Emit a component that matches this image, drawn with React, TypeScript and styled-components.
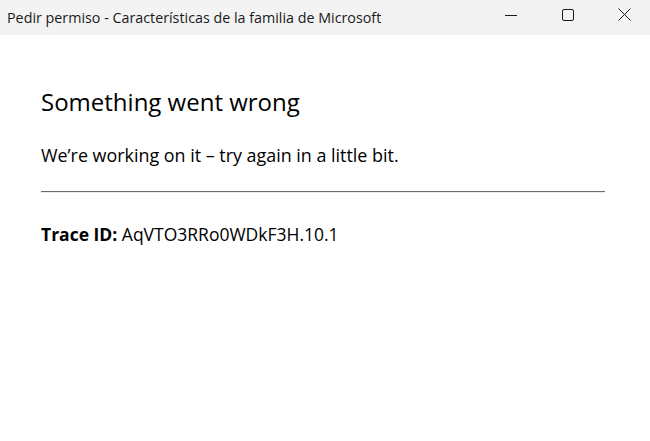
import React from "react";
import styled, { createGlobalStyle } from "styled-components";

const GlobalStyle = createGlobalStyle`
  html, body {
    margin: 0;
    padding: 0;
    background: #ffffff;
  }
  body {
    font-family: "Open Sans", "Noto Sans", sans-serif;
    color: #000000;
  }
`;

const Window = styled.div`
  width: 650px;
  height: 441px;
  display: flex;
  flex-direction: column;
  background: #ffffff;
  overflow: hidden;
`;

const TitleBar = styled.div`
  height: 35px;
  background: #f3f3f3;
  display: flex;
  align-items: center;
  justify-content: space-between;
  padding-left: 7px;
  overflow: hidden;
`;

const Title = styled.div`
  font-size: 14.3px;
  color: #1a1a1a;
  white-space: nowrap;
  margin-top: -1px;
`;

const Controls = styled.div`
  display: flex;
  height: 100%;
  margin-right: -3px;
`;

const ControlButton = styled.div`
  width: 57px;
  height: 100%;
  display: flex;
  align-items: center;
  justify-content: center;
  color: #1a1a1a;
  padding-bottom: 6px;
  box-sizing: border-box;
`;

const Content = styled.main`
  padding: 51px 45px 0 41px;
  display: flex;
  flex-direction: column;
`;

const Heading = styled.h1`
  margin: 0;
  font-size: 24px;
  font-weight: 400;
  line-height: 32px;
`;

const Message = styled.p`
  margin: 25px 0 0;
  font-size: 17.9px;
  line-height: 24px;
`;

const Divider = styled.hr`
  margin: 24px 0 0;
  border: none;
  border-top: 1px solid #6d6d6d;
  border-bottom: 1px solid #ececec;
  height: 0;
`;

const Trace = styled.p`
  margin: 29px 0 0;
  font-size: 17.5px;
  line-height: 24px;
`;

const Label = styled.span`
  font-weight: 700;
`;

export default function App() {
  return (
    <>
      <GlobalStyle />
      <Window>
        <TitleBar>
          <Title>Pedir permiso - Características de la familia de Microsoft</Title>
          <Controls>
            <ControlButton>
              <svg width="12" height="12" viewBox="0 0 12 12">
                <path d="M0 6.5h12" stroke="currentColor" strokeWidth="1" />
              </svg>
            </ControlButton>
            <ControlButton>
              <svg width="12" height="12" viewBox="0 0 12 12">
                <rect x="0.5" y="0.5" width="11" height="11" rx="1.5" fill="none" stroke="currentColor" strokeWidth="1" />
              </svg>
            </ControlButton>
            <ControlButton>
              <svg width="13" height="13" viewBox="0 0 13 13">
                <path d="M0.5 0.5l12 12M12.5 0.5l-12 12" stroke="currentColor" strokeWidth="1" />
              </svg>
            </ControlButton>
          </Controls>
        </TitleBar>
        <Content>
          <Heading>Something went wrong</Heading>
          <Message>We’re working on it – try again in a little bit.</Message>
          <Divider />
          <Trace>
            <Label>Trace ID:</Label> AqVTO3RRo0WDkF3H.10.1
          </Trace>
        </Content>
      </Window>
    </>
  );
}
